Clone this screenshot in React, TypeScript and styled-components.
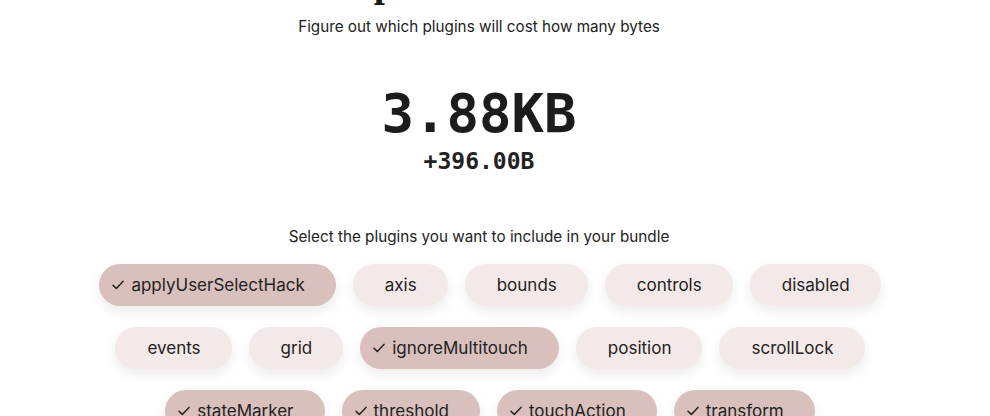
import React, { useState } from "react";
import styled, { createGlobalStyle } from "styled-components";

const Global = createGlobalStyle`
  html, body { margin: 0; padding: 0; background: #ffffff; }
  body { font-family: Inter, "Noto Sans", sans-serif; color: #1f1f1f; overflow: hidden; }
`;

const Page = styled.main`
  display: flex;
  flex-direction: column;
  align-items: center;
  width: 958px;
`;

const Title = styled.h1`
  margin: -41px 0 0 0;
  font-family: "Liberation Serif", "DejaVu Serif", serif;
  font-size: 40px;
  line-height: 48px;
  font-weight: 700;
  color: #1a1a1a;
`;

const Subtitle = styled.p`
  margin: 8px 0 0 0;
  font-size: 15.25px;
  line-height: 24px;
  color: #222;
`;

const Total = styled.div`
  margin-top: 43px;
  font-family: "DejaVu Sans Mono", "Liberation Mono", monospace;
  font-size: 54px;
  line-height: 64px;
  font-weight: 700;
  color: #1c1c1c;
`;

const Delta = styled.div`
  margin-top: 1px;
  font-family: "DejaVu Sans Mono", "Liberation Mono", monospace;
  font-size: 23px;
  line-height: 28px;
  font-weight: 700;
  color: #222;
`;

const Prompt = styled.p`
  margin: 50px 0 0 0;
  font-size: 15.25px;
  line-height: 24px;
  color: #222;
`;

const Chips = styled.div`
  margin: 15px 0 0 22px;
  display: flex;
  flex-wrap: wrap;
  justify-content: center;
  gap: 21px 17px;
  max-width: 840px;
`;

const Chip = styled.button<{ $on: boolean }>`
  display: inline-flex;
  align-items: center;
  height: 42px;
  padding: 0 31px 0 32px;
  border: none;
  border-radius: 21px;
  background: ${(p) => (p.$on ? "#d9c0bd" : "#f3e9e8")};
  box-shadow: 0 5px 12px rgba(60, 30, 30, 0.09);
  font-family: Inter, "Noto Sans", sans-serif;
  font-size: 17px;
  color: #222;
  cursor: pointer;
`;

const Check = styled.span`
  display: inline-flex;
  width: 12px;
  margin-left: -19px;
  margin-right: 7px;
`;

const plugins = [
  "applyUserSelectHack",
  "axis",
  "bounds",
  "controls",
  "disabled",
  "events",
  "grid",
  "ignoreMultitouch",
  "position",
  "scrollLock",
  "stateMarker",
  "threshold",
  "touchAction",
  "transform",
];

const initial = new Set([
  "applyUserSelectHack",
  "ignoreMultitouch",
  "stateMarker",
  "threshold",
  "touchAction",
  "transform",
]);

export default function App() {
  const [sel, setSel] = useState<Set<string>>(initial);
  const toggle = (n: string) => {
    const s = new Set(sel);
    if (s.has(n)) s.delete(n);
    else s.add(n);
    setSel(s);
  };
  return (
    <>
      <Global />
      <Page>
        <Title>Compare bundle sizes</Title>
        <Subtitle>Figure out which plugins will cost how many bytes</Subtitle>
        <Total>3.88KB</Total>
        <Delta>+396.00B</Delta>
        <Prompt>Select the plugins you want to include in your bundle</Prompt>
        <Chips>
          {plugins.map((p) => (
            <Chip key={p} $on={sel.has(p)} onClick={() => toggle(p)}>
              {sel.has(p) && (
                <Check>
                  <svg width="12" height="10" viewBox="0 0 12 10" fill="none">
                    <path d="M1 5.2 L4.3 8.4 L11 1.4" stroke="#222" strokeWidth="1.5" strokeLinecap="round" strokeLinejoin="round" />
                  </svg>
                </Check>
              )}
              {p}
            </Chip>
          ))}
        </Chips>
      </Page>
    </>
  );
}
